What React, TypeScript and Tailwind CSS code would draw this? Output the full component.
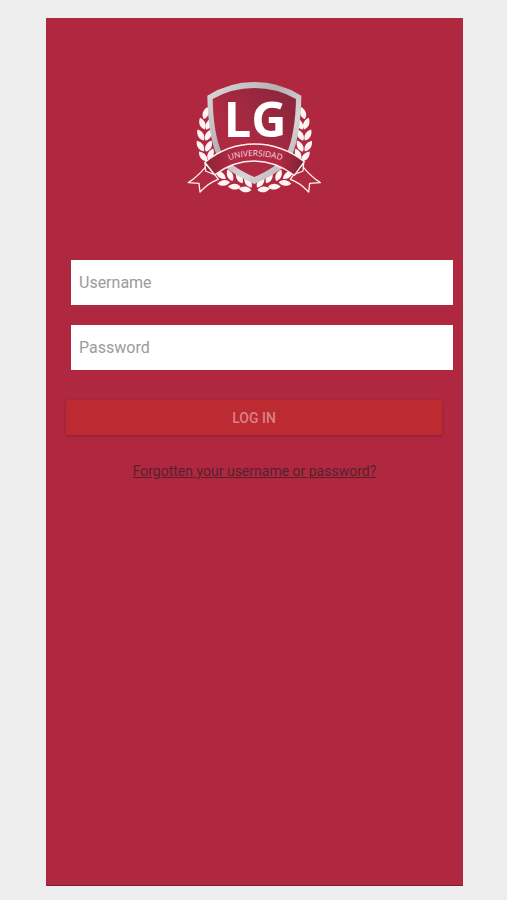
import React from 'react';

// [x, y, angle] of every leaf on the left half of the wreath
const leaves = [
  [77, 114, 16],
  [67, 146, -22],
  [87, 147, 26],
  [62, 180, -30],
  [85, 180, 28],
  [61, 213, -34],
  [86, 213, 28],
  [69, 244, -40],
  [92, 238, 24],
  [122, 300, -52],
  [150, 301, -24],
  [131, 324, -96],
  [178, 308, -30],
  [163, 335, -88],
  [204, 322, -36],
  [195, 343, -84],
];

const Wreath: React.FC = () => (
  <g fill="#fff4f4">
    {leaves.map(([x, y, angle], idx) => (
      <path key={idx} d="M0 19C-11 10-12-6 0-19C12-6 11 10 0 19Z" transform={`translate(${x} ${y}) rotate(${angle})`} />
    ))}
  </g>
);

const RibbonTail: React.FC = () => (
  <g fill="#b02a42" stroke="#fff0f0" strokeWidth="4" strokeLinejoin="round">
    <path d="M75 278C60 296 42 312 25 323L57 325L60 351C76 334 94 320 115 313L104 298Z" />
    <path d="M75 264L77 288L104 299Z" fill="#8f2438" />
  </g>
);

const Crest: React.FC = () => (
  <svg viewBox="-3 0 453 375" className="w-[151px] h-[125px]" role="img" aria-label="LG Universidad">
    <defs>
      <linearGradient id="metal" x1="0" y1="0" x2="1" y2="1">
        <stop offset="0" stopColor="#dedada" />
        <stop offset="0.4" stopColor="#b5b0b2" />
        <stop offset="0.65" stopColor="#d8d5d6" />
        <stop offset="1" stopColor="#aaa5a7" />
      </linearGradient>
      <linearGradient id="field" x1="0" y1="1" x2="1" y2="0">
        <stop offset="0.4" stopColor="#ac2a42" />
        <stop offset="1" stopColor="#86253b" />
      </linearGradient>
      <linearGradient id="ribbon">
        <stop offset="0" stopColor="#8f2438" />
        <stop offset="0.3" stopColor="#b02a42" />
        <stop offset="0.75" stopColor="#b02a42" />
        <stop offset="1" stopColor="#7d2034" />
      </linearGradient>
      <path id="motto" d="M147 256Q225 229 320 260" />
    </defs>

    <Wreath />
    <g transform="translate(446 0) scale(-1 1)">
      <Wreath />
    </g>

    <path d="M82 62Q147 21 223 21Q299 21 364 62C363 130 355 200 334 245C312 284 270 305 223 327C176 305 134 284 112 245C91 200 83 130 82 62Z" fill="url(#metal)" />
    <path d="M98 72Q155 39 223 39Q291 39 348 72C347 130 339 195 319 237C300 268 264 288 223 306C182 288 146 268 127 237C107 195 99 130 98 72Z" fill="url(#field)" />

    <text x="131" y="185" fontSize="146" fontWeight="700" fill="#ffffff" className="font-['Open_Sans',sans-serif]">LG</text>

    <RibbonTail />
    <g transform="translate(446 0) scale(-1 1)">
      <RibbonTail />
    </g>
    <path d="M75 262Q141 207 223 207Q305 207 373 260L343 301Q286 258 223 258Q160 258 104 299Z" fill="url(#ribbon)" stroke="#fff0f0" strokeWidth="4" strokeLinejoin="round" />
    <text fontSize="25" fill="#f3dfe2" className="font-['Open_Sans',sans-serif]">
      <textPath href="#motto">UNIVERSIDAD</textPath>
    </text>
  </svg>
);

const App: React.FC = () => {
  return (
    <div className="min-h-screen bg-[#eeeeee] pt-[18px] pb-[14px] pl-[46px] pr-[44px] font-[Roboto,sans-serif]">
      <main className="min-h-[calc(100vh-32px)] bg-[#b02840] border-b border-[#7d2034] pt-[57px]">
        <div className="flex justify-center">
          <Crest />
        </div>

        <form className="mt-[60px]" onSubmit={(e) => e.preventDefault()}>
          <div className="flex flex-col gap-5 pl-[25px] pr-[10px]">
            <input
              type="text"
              aria-label="Username"
              placeholder="Username"
              className="w-full h-[45px] px-2 bg-white text-base text-gray-800 placeholder:text-[#9b9b9b] outline-none"
            />
            <input
              type="password"
              aria-label="Password"
              placeholder="Password"
              className="w-full h-[45px] px-2 bg-white text-base text-gray-800 placeholder:text-[#9b9b9b] outline-none"
            />
          </div>
          <div className="mt-[30px] pl-5 pr-[21px]">
            <button type="submit" className="w-full h-[35px] bg-[#bd2a31] text-sm font-medium text-[#db8189] shadow-[0_1px_3px_rgba(0,0,0,0.25)]">
              LOG IN
            </button>
          </div>
        </form>

        <div className="mt-6 text-center">
          <a href="#" className="text-sm leading-5 text-[#57202d] underline">
            Forgotten your username or password?
          </a>
        </div>
      </main>
    </div>
  );
};

export default App;
